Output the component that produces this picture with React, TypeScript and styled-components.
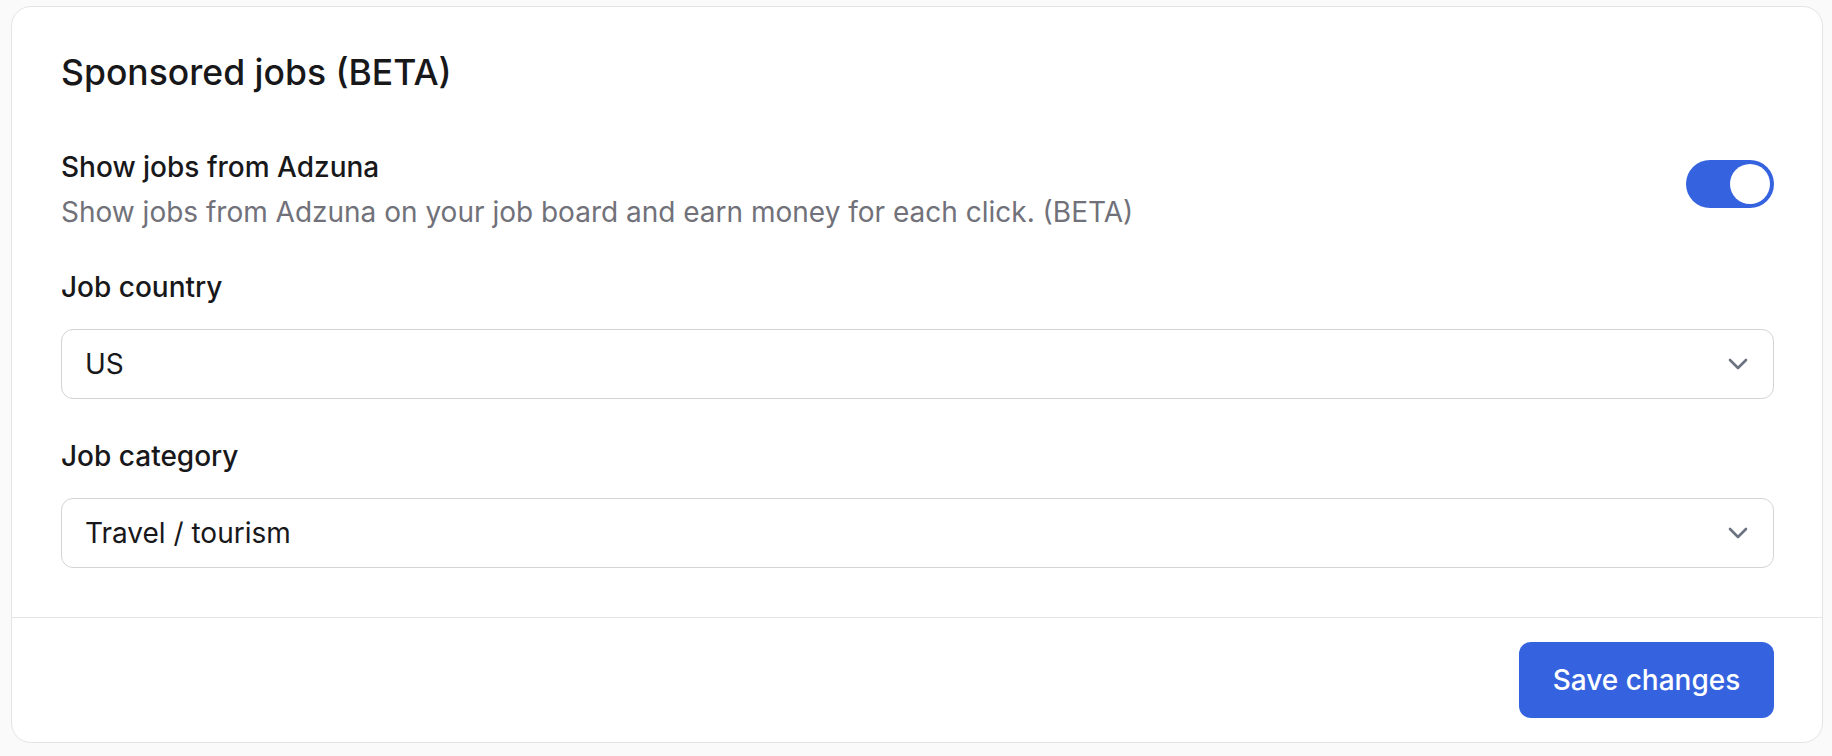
import React, { useState } from "react"
import styled, { createGlobalStyle } from "styled-components"

const GlobalStyle = createGlobalStyle`
  html, body {
    margin: 0;
    padding: 0;
    background: #fafafa;
  }
  body {
    font-family: Inter, "Noto Sans", "Liberation Sans", sans-serif;
    color: #18181b;
    -webkit-font-smoothing: antialiased;
  }
`

const Page = styled.div`
  padding: 6px 9px 12px 11px;
`

const Card = styled.section`
  background: #fff;
  border: 1.5px solid #e4e4e7;
  border-radius: 20px;
  overflow: hidden;
`

const Body = styled.div`
  padding: 44px 48px 49px 49px;
  display: flex;
  flex-direction: column;
`

const Title = styled.h2`
  margin: 0 0 55px;
  font-size: 35.5px;
  line-height: 44px;
  font-weight: 500;
`

const ToggleRow = styled.div`
  display: flex;
  align-items: flex-start;
  justify-content: space-between;
  margin-bottom: 38px;
`

const Label = styled.div`
  font-size: 28px;
  line-height: 34px;
  font-weight: 500;
`

const Hint = styled.div`
  margin-top: 8px;
  font-size: 28px;
  line-height: 40px;
  color: #71717a;
`

const Switch = styled.button<{ $on: boolean }>`
  margin-top: 10px;
  width: 88px;
  height: 48px;
  padding: 4px;
  border: none;
  border-radius: 24px;
  background: ${({ $on }) => ($on ? "#3563e0" : "#d4d4d8")};
  display: flex;
  justify-content: ${({ $on }) => ($on ? "flex-end" : "flex-start")};
  cursor: pointer;
`

const Knob = styled.span`
  width: 40px;
  height: 40px;
  border-radius: 50%;
  background: #fff;
`

const Field = styled.div<{ $last?: boolean }>`
  display: flex;
  flex-direction: column;
  gap: 25px;
  margin-bottom: ${({ $last }) => ($last ? 0 : 40)}px;
`

const SelectWrap = styled.div`
  position: relative;
`

const Select = styled.select`
  appearance: none;
  width: 100%;
  height: 70px;
  padding: 0 60px 0 23px;
  border: 1.5px solid #d4d4d8;
  border-radius: 12px;
  background: #fff;
  font-family: inherit;
  font-size: 28px;
  color: #18181b;
  outline: none;
`

const Chevron = styled.svg`
  position: absolute;
  right: 26px;
  top: 50%;
  width: 20px;
  height: 12px;
  margin-top: -6px;
  pointer-events: none;
`

const Footer = styled.div`
  border-top: 1.5px solid #e4e4e7;
  padding: 24px 48px 24px;
  display: flex;
  justify-content: flex-end;
`

const SaveButton = styled.button`
  width: 255px;
  height: 76px;
  border: none;
  border-radius: 12px;
  background: #3563e0;
  color: #fff;
  font-family: inherit;
  font-size: 28px;
  font-weight: 500;
  cursor: pointer;
`

const countries = ["US", "GB", "CA", "AU", "DE", "FR"]
const categories = ["Travel / tourism", "IT jobs", "Sales", "Healthcare"]

const Dropdown: React.FC<{ value: string; options: string[]; onChange: (v: string) => void }> = ({
  value,
  options,
  onChange,
}) => (
  <SelectWrap>
    <Select value={value} onChange={(e) => onChange(e.target.value)}>
      {options.map((o) => (
        <option key={o}>{o}</option>
      ))}
    </Select>
    <Chevron viewBox="0 0 20 12" fill="none">
      <path d="M2 2l8 8 8-8" stroke="#6b7280" strokeWidth="2.6" strokeLinecap="round" strokeLinejoin="round" />
    </Chevron>
  </SelectWrap>
)

export default function App() {
  const [on, setOn] = useState(true)
  const [country, setCountry] = useState("US")
  const [category, setCategory] = useState("Travel / tourism")

  return (
    <Page>
      <GlobalStyle />
      <Card>
        <Body>
          <Title>Sponsored jobs (BETA)</Title>

          <ToggleRow>
            <div>
              <Label>Show jobs from Adzuna</Label>
              <Hint>Show jobs from Adzuna on your job board and earn money for each click. (BETA)</Hint>
            </div>
            <Switch $on={on} onClick={() => setOn(!on)}>
              <Knob />
            </Switch>
          </ToggleRow>

          <Field>
            <Label>Job country</Label>
            <Dropdown value={country} options={countries} onChange={setCountry} />
          </Field>

          <Field $last>
            <Label>Job category</Label>
            <Dropdown value={category} options={categories} onChange={setCategory} />
          </Field>
        </Body>

        <Footer>
          <SaveButton>Save changes</SaveButton>
        </Footer>
      </Card>
    </Page>
  )
}
